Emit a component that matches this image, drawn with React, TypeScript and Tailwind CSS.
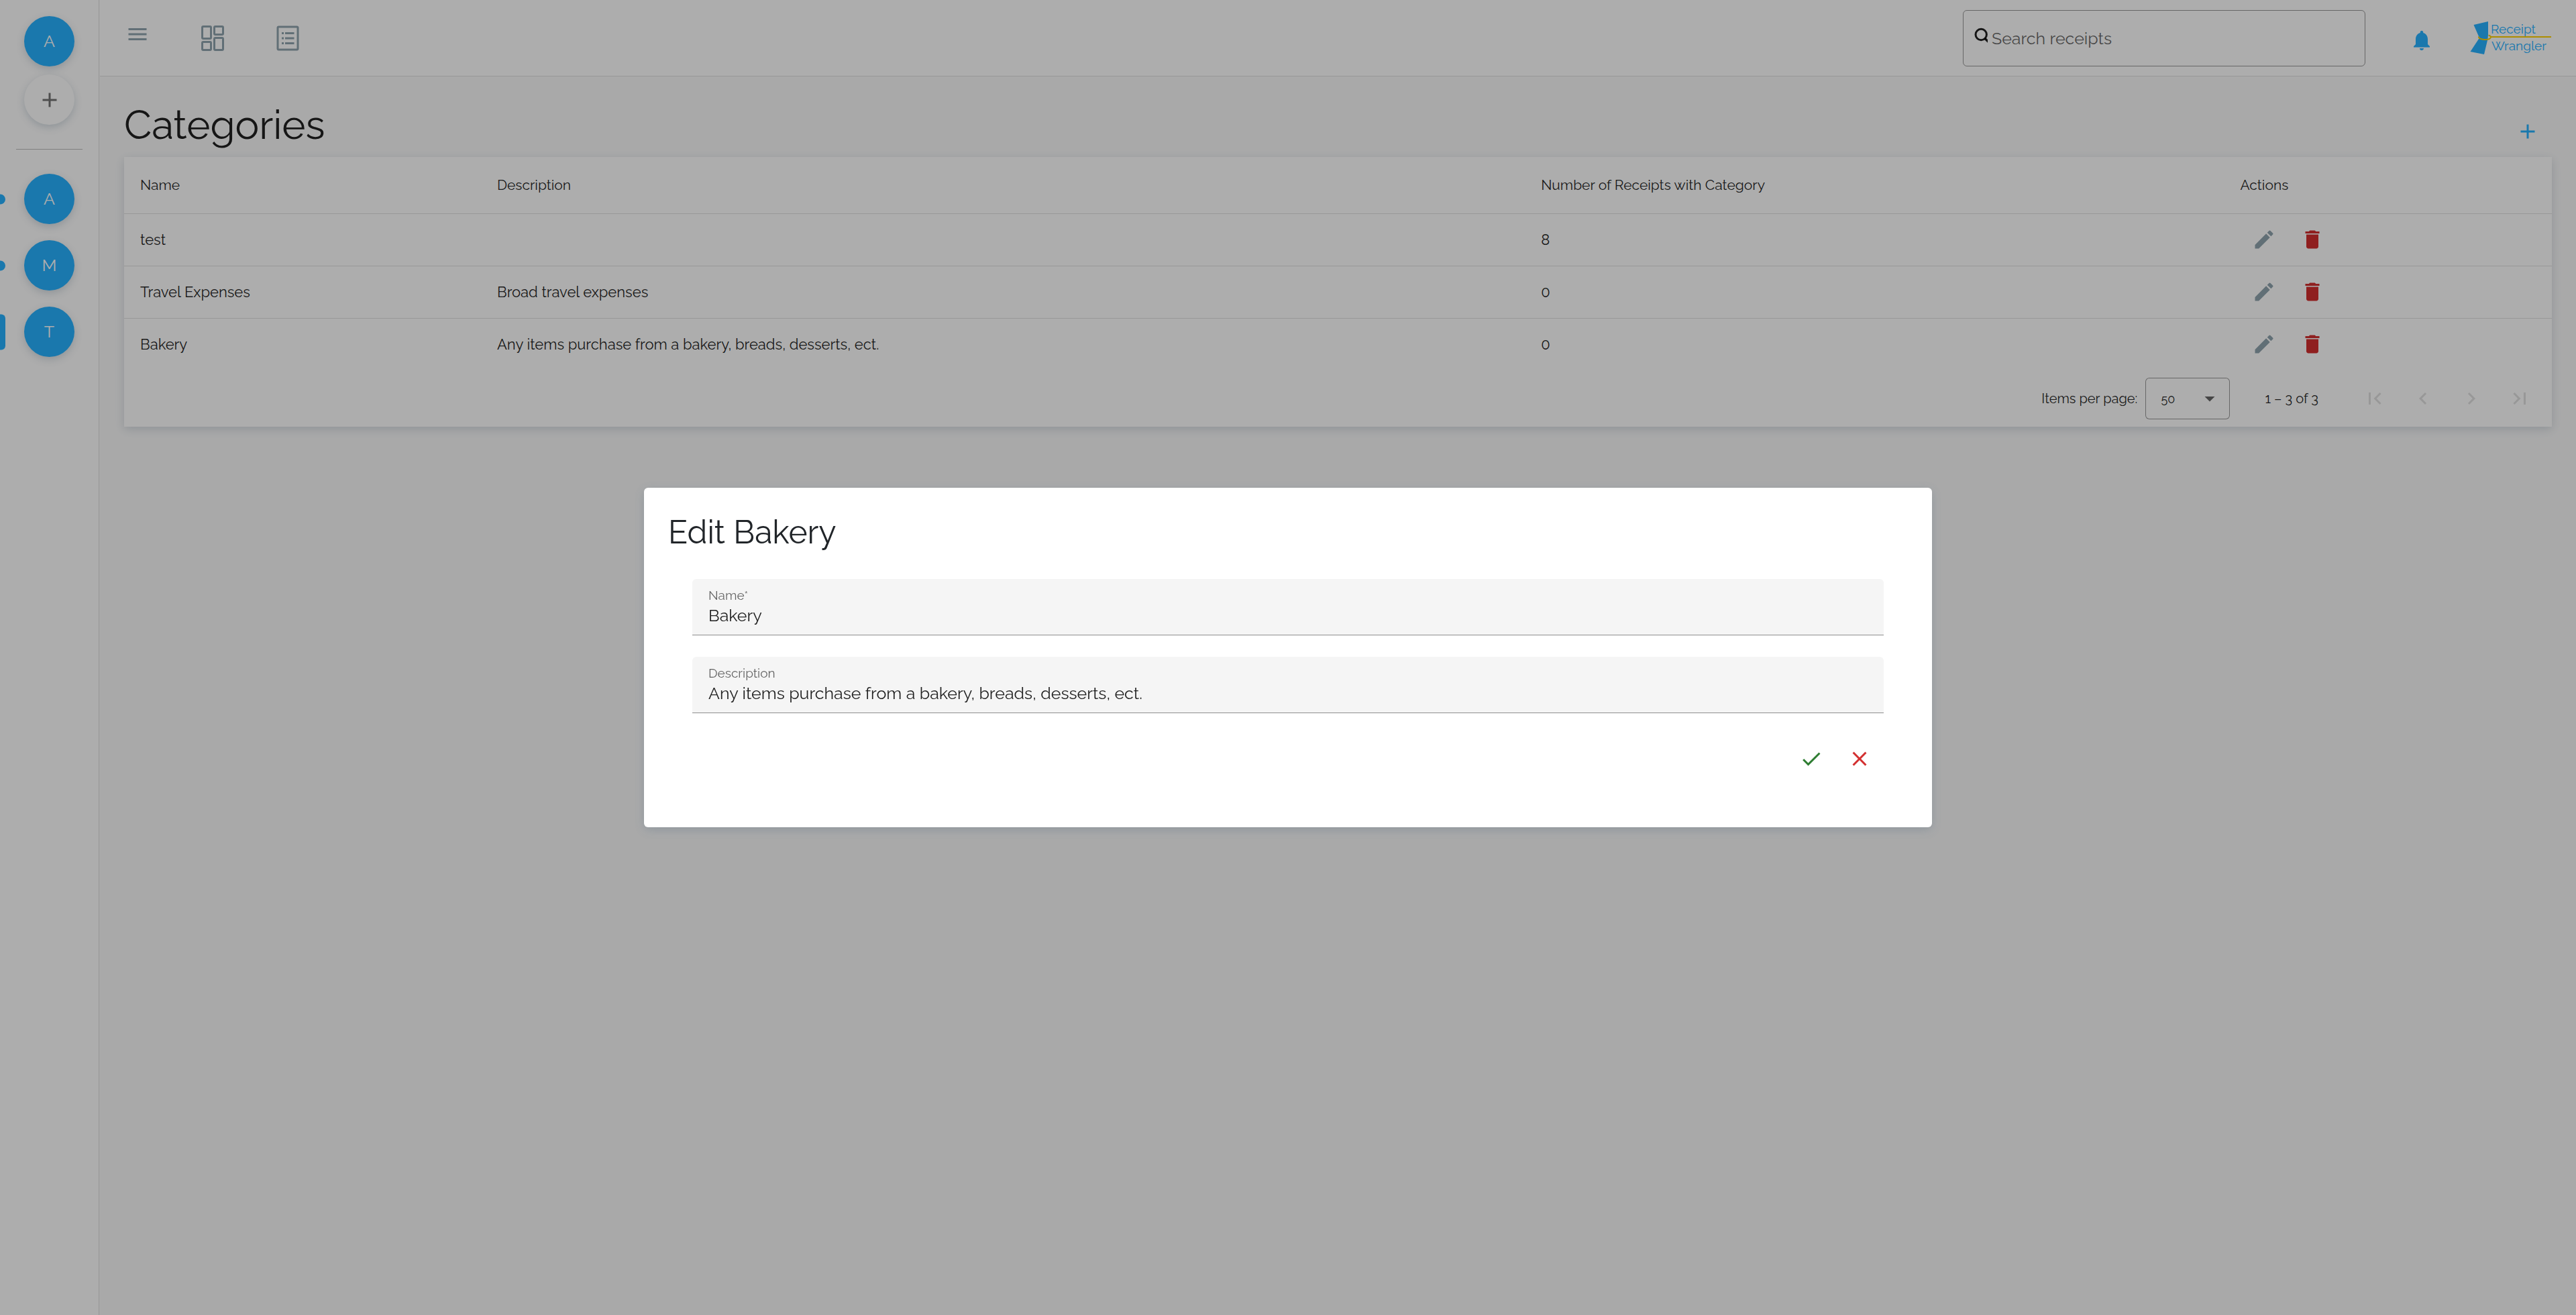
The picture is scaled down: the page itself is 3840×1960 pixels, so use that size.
import React from "react";
import {
  MdAdd,
  MdArrowDropDown,
  MdChevronLeft,
  MdChevronRight,
  MdClose,
  MdDelete,
  MdDone,
  MdEdit,
  MdFirstPage,
  MdLastPage,
  MdMenu,
  MdNotifications,
} from "react-icons/md";

type Category = { name: string; description: string; receipts: number };

const categories: Category[] = [
  { name: "test", description: "", receipts: 8 },
  { name: "Travel Expenses", description: "Broad travel expenses", receipts: 0 },
  {
    name: "Bakery",
    description: "Any items purchase from a bakery, breads, desserts, ect.",
    receipts: 0,
  },
];

const groups = [
  { letter: "A", active: false },
  { letter: "M", active: false },
  { letter: "T", active: true },
];

const circle =
  "flex size-[75px] items-center justify-center rounded-full text-[25px] leading-none shadow-[0_4px_12px_rgba(60,90,120,0.22)]";

function DashboardIcon() {
  return (
    <svg className="h-[38px] w-[34px]" viewBox="0 0 34 38" fill="none" stroke="currentColor" strokeWidth="3" aria-hidden="true">
      <rect x="1.5" y="1.5" width="13" height="18" rx="1.5" />
      <rect x="19.5" y="1.5" width="13" height="12" rx="1.5" />
      <rect x="1.5" y="24.5" width="13" height="12" rx="1.5" />
      <rect x="19.5" y="18.5" width="13" height="18" rx="1.5" />
    </svg>
  );
}

function ReceiptsIcon() {
  return (
    <svg className="h-[38px] w-[34px]" viewBox="0 0 34 38" fill="none" stroke="currentColor" strokeWidth="3" aria-hidden="true">
      <rect x="2" y="2" width="30" height="34" rx="1.5" />
      <path d="M8 11.5h3M13 11.5h13.5M8 19h3M13 19h13.5M8 26.5h3M13 26.5h13.5" />
    </svg>
  );
}

function SearchIcon() {
  return (
    <svg className="h-[24px] w-[20px]" viewBox="0 0 20 24" fill="none" stroke="currentColor" strokeWidth="3" aria-hidden="true">
      <circle cx="10.2" cy="10.5" r="8.2" />
      <path d="M15.8 16.2l8 8" strokeWidth="3.5" />
    </svg>
  );
}

function Logo() {
  return (
    <svg className="h-[50px] w-[122px]" viewBox="0 0 122 50" role="img" aria-label="Receipt Wrangler">
      <path d="M5.500 5L27 0V20L26.500 26L21 49L0.500 45L14 24.500Z" fill="#27b1ff" />
      <path d="M13 22.500C12 28 30 28.500 31 23.500C31 21.500 29.500 21 27.500 20.500" fill="none" stroke="#ffd000" strokeWidth="2" />
      <path d="M31 23H121" stroke="#ffd000" strokeWidth="2" />
      <g fill="#27b1ff" fontFamily="Raleway, Lato, sans-serif" fontSize="19">
        <text x="31" y="18">Receipt</text>
        <text x="32" y="43">Wrangler</text>
      </g>
    </svg>
  );
}

function Sidebar() {
  return (
    <aside className="flex w-[148px] shrink-0 flex-col items-center border-r border-black/12 bg-white pt-6">
      <button type="button" className={`${circle} bg-[#27b1ff] text-white`}>A</button>
      <button type="button" aria-label="Add group" className={`${circle} mt-3 bg-white text-black/55`}>
        <MdAdd className="size-9" />
      </button>
      <hr className="mt-9 mb-9 w-[99px] border-t border-black/25" />
      <nav className="flex w-full flex-col gap-6">
        {groups.map((group) => (
          <div key={group.letter} className="relative flex justify-center">
            <span
              className={
                group.active
                  ? "absolute top-1/2 left-0 h-[53px] w-2 -translate-y-1/2 rounded-r-md bg-[#27b1ff]"
                  : "absolute top-1/2 left-0 h-[15px] w-2 -translate-y-1/2 rounded-r-full bg-[#27b1ff]"
              }
            />
            <button type="button" className={`${circle} bg-[#27b1ff] text-white`}>{group.letter}</button>
          </div>
        ))}
      </nav>
    </aside>
  );
}

function TopBar() {
  return (
    <header className="flex h-[114px] items-center border-b border-black/12 bg-white pr-9 text-[#90a4ae]">
      <button type="button" aria-label="Toggle menu" className="mb-3 ml-5 flex size-[72px] items-center justify-center">
        <MdMenu className="size-9" />
      </button>
      <a href="#dashboard" aria-label="Dashboard" className="ml-10 flex size-[72px] items-center justify-center">
        <DashboardIcon />
      </a>
      <a href="#receipts" aria-label="Receipts" className="ml-10 flex size-[72px] items-center justify-center">
        <ReceiptsIcon />
      </a>
      <div role="search" className="ml-auto flex h-[84px] w-[600px] items-center rounded-md border border-black/40 pl-4 text-black/87">
        <span className="mb-2">
          <SearchIcon />
        </span>
        <input
          type="text"
          aria-label="Search receipts"
          placeholder="Search receipts"
          className="ml-1.5 h-12 min-w-0 flex-1 bg-transparent text-[25px] outline-none placeholder:text-black/60"
        />
      </div>
      <button type="button" aria-label="Notifications" className="mt-1.5 ml-12 flex size-[72px] items-center justify-center text-[#27b1ff]">
        <MdNotifications className="size-9" />
      </button>
      <a href="#home" className="ml-9">
        <Logo />
      </a>
    </header>
  );
}

const pageButton = "flex size-[72px] items-center justify-center text-black/12";

function CategoriesCard() {
  return (
    <section className="bg-white text-black/87 shadow-[0_4px_14px_rgba(60,90,120,0.2)]">
      <table className="w-full table-fixed text-left">
        <thead>
          <tr className="h-[84px] border-b border-black/12 text-[21px]">
            <th className="w-[14.7%] px-6 font-normal">Name</th>
            <th className="w-[43%] px-6 font-normal">Description</th>
            <th className="w-[28.8%] px-6 font-normal">Number of Receipts with Category</th>
            <th className="px-6 font-normal">Actions</th>
          </tr>
        </thead>
        <tbody className="text-[22px]">
          {categories.map((category) => (
            <tr key={category.name} className="h-[78px] border-b border-black/12 last:border-b-0">
              <td className="px-6">{category.name}</td>
              <td className="px-6">{category.description}</td>
              <td className="px-6">{category.receipts}</td>
              <td className="px-6">
                <div className="flex">
                  <button type="button" aria-label={`Edit ${category.name}`} className="flex size-[72px] items-center justify-center text-[#90a4ae]">
                    <MdEdit className="size-9" />
                  </button>
                  <button type="button" aria-label={`Delete ${category.name}`} className="flex size-[72px] items-center justify-center text-[#d32f2f]">
                    <MdDelete className="size-9" />
                  </button>
                </div>
              </td>
            </tr>
          ))}
        </tbody>
      </table>
      <div className="flex h-[84px] items-center justify-end pr-3 text-[20px]">
        <label htmlFor="page-size">Items per page:</label>
        <div className="relative ml-3 w-[126px]">
          <select
            id="page-size"
            defaultValue="50"
            className="h-[62px] w-full appearance-none rounded-md border border-black/40 bg-white pl-[22px] text-[18px] outline-none"
          >
            <option value="15">15</option>
            <option value="50">50</option>
            <option value="100">100</option>
          </select>
          <MdArrowDropDown className="pointer-events-none absolute top-1/2 right-3 size-9 -translate-y-1/2 text-black/60" />
        </div>
        <span className="mr-12 ml-[52px]">1 – 3 of 3</span>
        <button type="button" disabled aria-label="First page" className={pageButton}><MdFirstPage className="size-9" /></button>
        <button type="button" disabled aria-label="Previous page" className={pageButton}><MdChevronLeft className="size-9" /></button>
        <button type="button" disabled aria-label="Next page" className={pageButton}><MdChevronRight className="size-9" /></button>
        <button type="button" disabled aria-label="Last page" className={pageButton}><MdLastPage className="size-9" /></button>
      </div>
    </section>
  );
}

function Field({ id, label, value }: { id: string; label: string; value: string }) {
  return (
    <div className="flex h-[84px] flex-col rounded-t-md border-b border-black/42 bg-[#f5f5f5] px-6 pt-3">
      <label htmlFor={id} className="text-[19px] leading-6 text-black/60">{label}</label>
      <input
        id={id}
        type="text"
        defaultValue={value}
        className="w-full bg-transparent text-[25px] leading-9 text-black/87 outline-none"
      />
    </div>
  );
}

function EditDialog() {
  return (
    <div className="fixed inset-0 flex items-center justify-center bg-black/32">
      <form
        role="dialog"
        aria-labelledby="dialog-title"
        className="w-1/2 rounded-md bg-white px-9 pt-9 pb-[66px] shadow-[0_4px_16px_rgba(60,90,120,0.25)]"
      >
        <h2 id="dialog-title" className="text-[48px] leading-[60px] text-[#212529]">Edit Bakery</h2>
        <div className="mt-10 flex flex-col gap-8 px-9">
          <Field id="category-name" label="Name*" value="Bakery" />
          <Field
            id="category-description"
            label="Description"
            value="Any items purchase from a bakery, breads, desserts, ect."
          />
        </div>
        <div className="mt-8 flex justify-end px-9">
          <button type="button" aria-label="Save" className="flex size-[72px] items-center justify-center text-[#2e7d32]">
            <MdDone className="size-9" />
          </button>
          <button type="button" aria-label="Cancel" className="flex size-[72px] items-center justify-center text-[#d32f2f]">
            <MdClose className="size-9" />
          </button>
        </div>
      </form>
    </div>
  );
}

export default function App() {
  return (
    <div className="flex min-h-screen gap-px bg-[#fafafa] font-[Raleway,Lato,sans-serif]">
      <Sidebar />
      <div className="min-w-0 flex-1">
        <TopBar />
        <main className="px-9 pt-9">
          <div className="flex items-start justify-between">
            <h1 className="text-[60px] leading-[72px] text-[#212121]">Categories</h1>
            <button type="button" aria-label="Add category" className="mt-2.5 -mb-2.5 flex size-[72px] items-center justify-center text-[#27b1ff]">
              <MdAdd className="size-9" />
            </button>
          </div>
          <div className="mt-3">
            <CategoriesCard />
          </div>
        </main>
      </div>
      <EditDialog />
    </div>
  );
}
